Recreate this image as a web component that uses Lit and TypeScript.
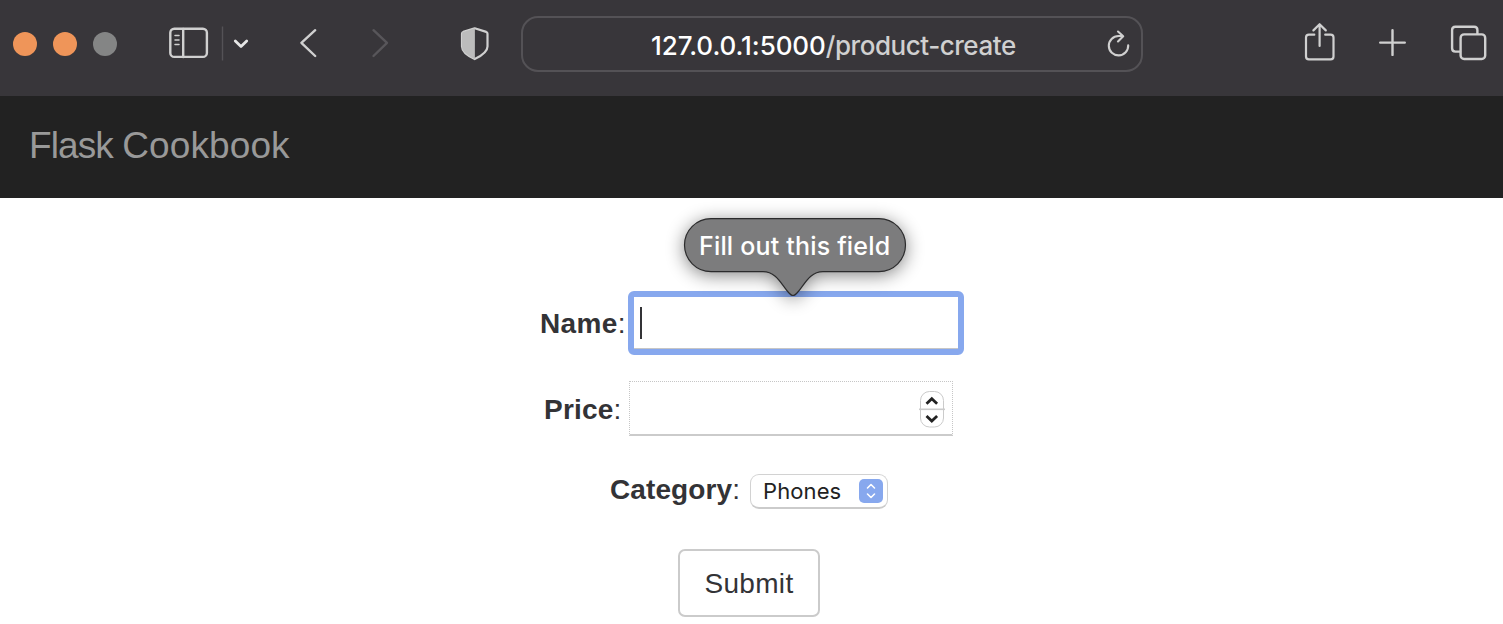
import { LitElement, html, css } from "lit";
import { customElement } from "lit/decorators.js";

@customElement("browser-toolbar")
class BrowserToolbar extends LitElement {
  static styles = css`
    :host { display: block; }
    .bar { box-sizing: border-box; height: 96px; background: #38363a; display: flex; align-items: flex-start; padding-left: 13px; }
    .lights { display: flex; gap: 16px; padding-top: 32px; }
    .light { width: 24px; height: 24px; border-radius: 50%; background: #ef9559; }
    .off { background: #848585; }
    svg { display: block; flex: none; fill: none; stroke: #d0d0d0; stroke-width: 2.4; stroke-linecap: round; stroke-linejoin: round; }
    .left { margin-left: 43px; }
    .address { box-sizing: border-box; width: 622px; height: 56px; margin-top: 16px; border: 2px solid #545256; border-radius: 17px; display: flex; align-items: center; flex: none; padding-left: 128px; }
    .url { flex: none; font: 500 26px/32px Inter, sans-serif; color: #d0d0d0; white-space: nowrap; padding-top: 3px; letter-spacing: -0.46px; }
    .host { color: #fff; letter-spacing: -0.06px; }
  `;
  render() {
    return html`
      <div class="bar">
        <div class="lights"><div class="light"></div><div class="light"></div><div class="light off"></div></div>
        <svg class="left" width="361" height="96" viewBox="160 0 361 96">
          <rect x="170.3" y="28.7" width="36.6" height="28.2" rx="4"></rect>
          <path d="M183.2 29v28"></path>
          <path d="M175 35.5h4M175 40h4M175 44.5h4" stroke-width="1.5"></path>
          <path d="M222.5 26.5v34" stroke="#545256" stroke-width="1.4" stroke-linecap="butt"></path>
          <path d="M235.3 41l5.7 5.5 5.7-5.5" stroke="#e6e6e6" stroke-width="2.8"></path>
          <path d="M315.2 30.2L301.4 42.8 315.2 56"></path>
          <path d="M373.5 30.2L387 42.8 373.5 56" stroke="#58565a"></path>
          <path d="M474.7 28.3l11.5 3.6c1 .4 1.3.8 1.3 1.8v12.8c0 5.2-6.3 9.5-12.8 12.6-6.5-3.1-12.7-7.4-12.7-12.6V33.7c0-1 .3-1.4 1.3-1.8z" stroke-width="2.2"></path>
          <path d="M474.9 28.3l-11.6 3.6c-1 .4-1.3.8-1.3 1.8v12.800c0 5.200 6.300 9.500 12.900 12.600z" fill="#bcbcbc" stroke="none"></path>
        </svg>
        <div class="address">
          <div class="url"><span class="host">127.0.0.1:5000</span>/product-create</div>
        </div>
        <svg width="360" height="96" viewBox="1143 0 360 96" overflow="visible">
          <path d="M1128.200 45.200a9.700 9.700 0 1 1-9.700-9.200h4.400M1118 31.500l5.200 4.700-5.200 5.300" stroke-width="2.100"></path>
          <path d="M1314.300 34.700h-5.400q-2.900 0-2.900 2.900v18.800q0 2.900 2.900 2.900h21.700q2.900 0 2.900-2.900V37.600q0-2.900-2.900-2.900h-5.400" stroke-width="2.200"></path>
          <path d="M1319.600 46V24.500M1313.400 30.400l6.200-6.200 6.200 6.200" stroke-width="2.200"></path>
          <path d="M1380.200 42.600h24.600M1392.500 30.300v24.600"></path>
          <path d="M1460 51.600h-4.600q-3.300 0-3.300-3.300V30q0-3.300 3.300-3.300h18.700q3.300 0 3.300 3.300v3.800"></path>
          <rect x="1460.600" y="34.400" width="24.600" height="24.600" rx="3.500"></rect>
        </svg>
      </div>
    `;
  }
}

@customElement("product-form")
class ProductForm extends LitElement {
  static styles = css`
    :host { display: block; font-family: "Liberation Sans", Arial, sans-serif; font-size: 28px; color: #333336; }
    .form { height: 426px; background: #fff; padding-top: 93px; box-sizing: border-box; }
    .row { display: flex; align-items: center; }
    .label { white-space: nowrap; flex: none; line-height: 32px; letter-spacing: 0.2px; }
    .name { padding-left: 540px; height: 64px; }
    .price { padding-left: 544px; height: 56px; margin-top: 25px; }
    .category { padding-left: 610px; height: 36px; margin-top: 37px; }
    .name .label { width: 88px; padding-top: 2px; letter-spacing: 0.35px; }
    .price .label { width: 85px; padding-top: 3px; }
    .category .label { width: 140px; margin-top: -2px; letter-spacing: 0.1px; }
    .focus { box-sizing: border-box; width: 336px; height: 64px; border: 6px solid #87a8ee; border-radius: 6px; background: #fff; display: flex; align-items: center; padding-left: 6px; box-shadow: inset 0 -1px #c6c6c6; position: relative; }
    .caret { width: 2px; height: 32px; background: #333336; }
    .number { box-sizing: border-box; width: 324px; height: 55px; border: 1px dotted #c6c6c6; border-bottom: 2px solid #cbcbcb; display: flex; align-items: center; justify-content: flex-end; padding: 2px 7px 0 0; }
    svg { display: block; flex: none; overflow: visible; }
    .select { box-sizing: border-box; width: 138px; height: 35px; border: 1px solid #d2d2d2; border-bottom: 2px solid #cbcbcb; border-radius: 9px; display: flex; align-items: center; padding-left: 12px; color: #222; }
    .value { width: 96px; flex: none; font: 400 22px/28px Inter, sans-serif; letter-spacing: 0.1px; }
    .submit { box-sizing: border-box; width: 142px; height: 68px; margin: 40px 0 0 678px; border: 2px solid #cbcbcb; border-radius: 7px; display: flex; align-items: center; justify-content: center; letter-spacing: 0.3px; padding-top: 2px; }
    .tip { position: absolute; left: 50px; top: -79px; width: 222px; height: 80px; }
    .tip-text { position: absolute; left: 15px; top: 12px; font: 500 25px/32px Inter, sans-serif; letter-spacing: 0.18px; color: #fff; white-space: nowrap; }
    .bubble { filter: drop-shadow(0 3px 9px rgba(0, 0, 0, 0.48)); }
  `;
  render() {
    return html`
      <div class="form">
        <div class="row name">
          <div class="label"><b>Name</b>:</div>
          <div class="focus">
            <div class="caret"></div>
            <div class="tip">
              <svg class="bubble" width="222" height="80" viewBox="0 0 222 80">
                <path d="M27 .6H195a26.500 26.500 0 0 1 0 53H139C125 53.600 120 68 112.500 75.500q-3.500 4-7 0C98 68 93 53.600 79 53.600H27a26.500 26.500 0 0 1 0-53z" fill="#7c7c7d" stroke="#2b2b2c" stroke-width="1.200"></path>
              </svg>
              <div class="tip-text">Fill out this field</div>
            </div>
          </div>
        </div>
        <div class="row price">
          <div class="label"><b>Price</b>:</div>
          <div class="number">
            <svg width="26" height="38" viewBox="0 0 26 38" fill="none" stroke="#cbcbcb">
              <rect x="1.500" y="1.500" width="23" height="35.500" rx="9"></rect>
              <path d="M0 19.300h26" stroke-width="1.600"></path>
              <path d="M7.500 13.700l5.300-5 5.300 5M7.500 26l5.300 5 5.300-5" stroke="#222" stroke-width="2.800"></path>
            </svg>
          </div>
        </div>
        <div class="row category">
          <div class="label"><b>Category</b>:</div>
          <div class="select">
            <div class="value">Phones</div>
            <svg width="24" height="24" viewBox="0 0 24 24" fill="none">
              <rect width="24" height="24" rx="5" fill="#87a8ee"></rect>
              <path d="M8.500 9l3.500-3.500L15.500 9M8.500 15l3.500 3.500 3.500-3.500" stroke="#fff" stroke-width="1.600" stroke-linecap="round" stroke-linejoin="round"></path>
            </svg>
          </div>
        </div>
        <div class="submit">Submit</div>
      </div>
    `;
  }
}

@customElement("app-root")
class AppRoot extends LitElement {
  static styles = css`
    :host { display: block; width: 1503px; height: 624px; overflow: hidden; background: #fff; }
    .nav { box-sizing: border-box; height: 102px; background: #222; padding: 30px 0 0 29px; font: 37px/40px "Liberation Sans", Arial, sans-serif; letter-spacing: 0.1px; color: #999; white-space: nowrap; }
    .first { letter-spacing: -0.9px; }
  `;
  render() {
    return html`
      <browser-toolbar></browser-toolbar>
      <div class="nav"><span class="first">Flask </span>Cookbook</div>
      <product-form></product-form>
    `;
  }
}
